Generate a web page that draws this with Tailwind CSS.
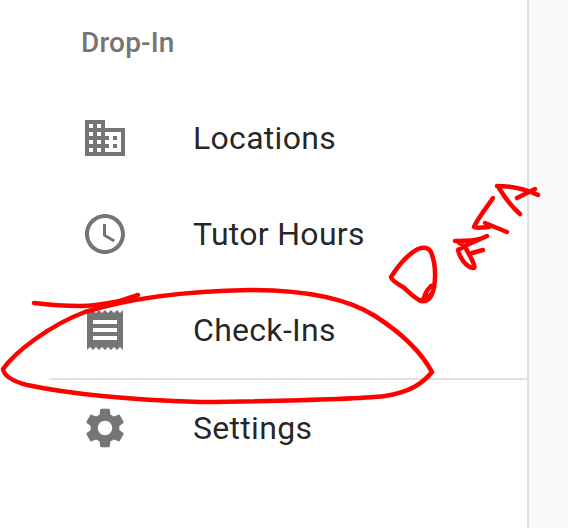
<!DOCTYPE html>
<html>
<head>
<meta charset="utf-8">
<script src="https://cdn.jsdelivr.net/npm/@tailwindcss/browser@4"></script>
</head>
<body class="m-0 bg-[#fafafa] font-['Roboto',sans-serif]">
<div class="relative w-[568px] h-[528px] overflow-hidden">
  <aside class="w-[529px] h-[528px] bg-white border-r-2 border-[#e0e0e0]">
    <div class="h-[90px] pl-[81px] pt-[27px] text-[28px] leading-[32px] tracking-[0.15px] font-medium text-[#757575]">Drop-In</div>
    <ul>
      <li class="h-[96px] flex items-center pl-[81px] gap-[64px] text-[32px] tracking-[0.3px] text-black/87">
        <svg class="w-[48px] h-[48px] fill-[#757575]" viewBox="0 0 24 24"><path d="M12 7V3H2v18h20V7H12zM6 19H4v-2h2v2zm0-4H4v-2h2v2zm0-4H4V9h2v2zm0-4H4V5h2v2zm4 12H8v-2h2v2zm0-4H8v-2h2v2zm0-4H8V9h2v2zm0-4H8V5h2v2zm10 12h-8v-2h2v-2h-2v-2h2v-2h-2V9h8v10zm-2-8h-2v2h2v-2zm0 4h-2v2h2v-2z"/></svg>
        <span>Locations</span>
      </li>
      <li class="h-[96px] flex items-center pl-[81px] gap-[64px] text-[32px] tracking-[0.3px] text-black/87">
        <svg class="w-[48px] h-[48px] fill-[#757575]" viewBox="0 0 24 24"><path d="M11.99 2C6.47 2 2 6.48 2 12s4.47 10 9.99 10C17.52 22 22 17.52 22 12S17.52 2 11.99 2zM12 20c-4.42 0-8-3.58-8-8s3.58-8 8-8 8 3.58 8 8-3.58 8-8 8zm.5-13H11v6l5.25 3.15.75-1.23-4.5-2.67z"/></svg>
        <span>Tutor Hours</span>
      </li>
      <li class="h-[96px] flex items-center pl-[81px] gap-[64px] text-[32px] tracking-[0.3px] text-black/87">
        <svg class="w-[48px] h-[48px] fill-[#757575]" viewBox="0 0 24 24"><path d="M18 17H6v-2h12v2zm0-4H6v-2h12v2zm0-4H6V7h12v2zM3 22l1.5-1.5L6 22l1.5-1.5L9 22l1.5-1.5L12 22l1.5-1.5L15 22l1.5-1.5L18 22l1.5-1.5L21 22V2l-1.5 1.5L18 2l-1.5 1.5L15 2l-1.5 1.5L12 2l-1.5 1.5L9 2 7.5 3.5 6 2 4.5 3.5 3 2v20z"/></svg>
        <span>Check-Ins</span>
      </li>
      <li class="ml-[49px] h-[2px] bg-[#e0e0e0]"></li>
      <li class="h-[96px] flex items-center pl-[81px] gap-[64px] text-[32px] tracking-[0.3px] text-black/87">
        <svg class="w-[48px] h-[48px] fill-[#757575]" viewBox="0 0 24 24"><path d="M19.14 12.94c.04-.3.06-.61.06-.94 0-.32-.02-.64-.07-.94l2.03-1.58c.18-.14.23-.41.12-.61l-1.92-3.32c-.12-.22-.37-.29-.59-.22l-2.39.96c-.5-.38-1.03-.7-1.62-.94l-.36-2.54c-.04-.24-.24-.41-.48-.41h-3.84c-.24 0-.43.17-.47.41l-.36 2.54c-.59.24-1.13.57-1.62.94l-2.39-.96c-.22-.08-.47 0-.59.22L2.74 8.87c-.12.21-.08.47.12.61l2.03 1.58c-.05.3-.09.63-.09.94s.02.64.07.94l-2.03 1.58c-.18.14-.23.41-.12.61l1.92 3.32c.12.22.37.29.59.22l2.39-.96c.5.38 1.03.7 1.62.94l.36 2.54c.05.24.24.41.48.41h3.84c.24 0 .44-.17.47-.41l.36-2.54c.59-.24 1.13-.56 1.62-.94l2.39.96c.22.08.47 0 .59-.22l1.92-3.32c.12-.22.07-.47-.12-.61l-2.01-1.58zM12 15.6c-1.98 0-3.6-1.62-3.6-3.6s1.62-3.6 3.6-3.6 3.6 1.62 3.6 3.6-1.62 3.6-3.6 3.6z"/></svg>
        <span>Settings</span>
      </li>
    </ul>
  </aside>
  <svg class="absolute left-0 top-0 w-[568px] h-[528px] pointer-events-none" viewBox="0 0 568 528" fill="none" stroke="#ff0000" stroke-linecap="round" stroke-linejoin="round">
    <path stroke-width="4.5" d="M432 372 C 420 350 400 332 375 316 C 345 297 300 290 250 290 C 190 291 130 298 85 312 C 50 325 15 352 3 369 C 4 376 12 381 27 385 C 70 394 135 400 200 402 C 280 401 350 400 385 396 C 410 392 422 384 432 372 Z"/>
    <path stroke-width="4.5" d="M34 303 C 50 305 65 306 80 306 C 95 306 110 303 120 301 L 138 295 L 122 302"/>
    <path stroke-width="4.5" d="M423 299 C 429 296 433 295 434 288 C 436 275 435 262 431 252 C 428 247 423 247 418 249 C 408 254 398 266 391 277 C 392 281 398 284 403 287 C 409 292 414 298 421 301 C 427 302 431 299 433 291 M431 286 C 428 289 425 293 424 298"/>
    <path stroke-width="4.5" d="M455 241 C 465 240 478 242 487 236 L 467 245 L 458 250 C 460 258 466 267 473 268 C 477 269 472 259 465 247 L 457 241 M472 253 L 483 250"/>
    <path stroke-width="4.5" d="M493 198 C 487 207 478 218 474 227 C 479 229 486 227 489 227 M485 223 L 507 232"/>
    <path stroke-width="4.5" d="M497 186 C 510 186 525 189 538 195 M499 188 C 505 198 512 207 520 214 M535 189 L 517 198"/>
  </svg>
</div>
</body>
</html>
